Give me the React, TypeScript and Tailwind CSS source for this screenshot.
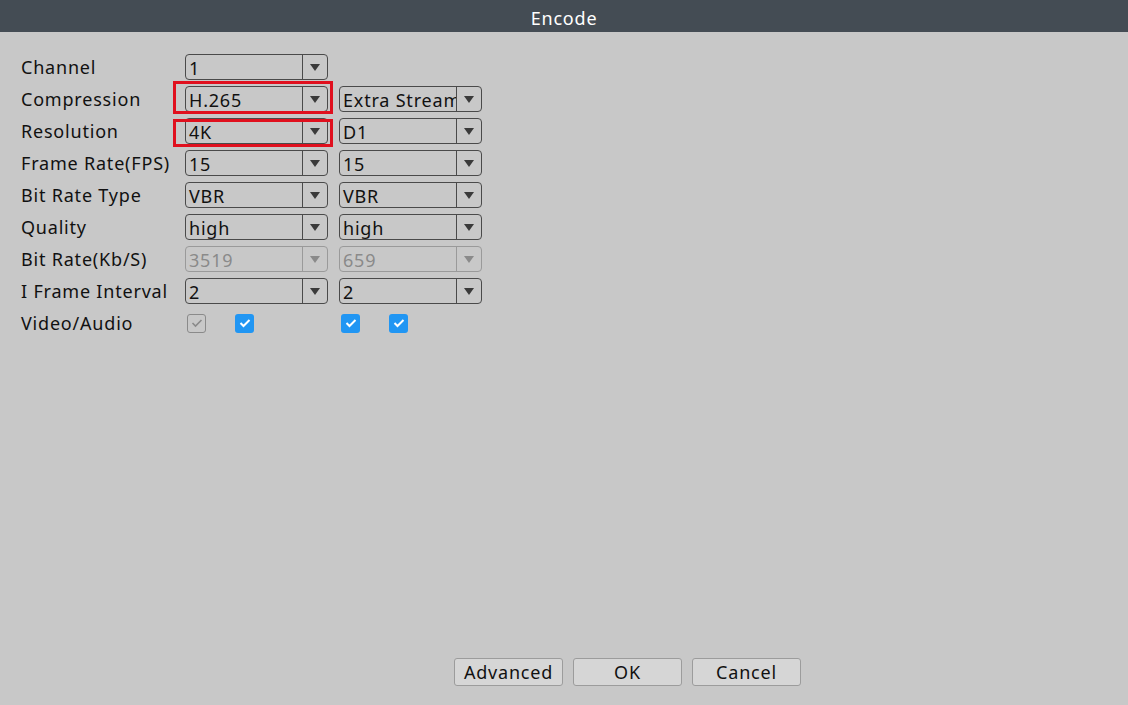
import React from "react";

const font = { fontFamily: '"Noto Sans", "Open Sans", sans-serif' };

function Arrow({ disabled }: { disabled?: boolean }) {
  return (
    <svg width="10" height="7" viewBox="0 0 10 7">
      <polygon points="0,0 10,0 5,7" fill={disabled ? "#8a8a8a" : "#3a3a3a"} />
    </svg>
  );
}

function Select({ value, disabled }: { value: string; disabled?: boolean }) {
  return (
    <div
      className={`flex h-[26px] w-[143px] rounded-[4px] border ${
        disabled ? "border-[#9a9a9a] text-[#8a8a8a]" : "border-[#4a4a4a] text-[#111]"
      }`}
    >
      <div className="flex-1 overflow-hidden whitespace-nowrap pl-[3px] text-[18px] leading-[27px] tracking-[0.8px]">
        {value}
      </div>
      <div
        className={`flex w-[25px] items-center justify-center border-l ${
          disabled ? "border-[#9a9a9a]" : "border-[#4a4a4a]"
        }`}
      >
        <Arrow disabled={disabled} />
      </div>
    </div>
  );
}

function Check({ gray }: { gray?: boolean }) {
  if (gray)
    return (
      <div className="flex h-[19px] w-[19px] items-center justify-center rounded-[3px] border border-[#8a8a8a]">
        <svg width="12" height="10" viewBox="0 0 12 10">
          <polyline points="1.5,5 4.5,8 10.5,2" fill="none" stroke="#8a8a8a" strokeWidth="1.6" />
        </svg>
      </div>
    );
  return (
    <div className="flex h-[19px] w-[19px] items-center justify-center rounded-[3px] bg-[#2196f3]">
      <svg width="12" height="10" viewBox="0 0 12 10">
        <polyline points="1.5,5 4.5,8 10.5,2" fill="none" stroke="#fff" strokeWidth="2" />
      </svg>
    </div>
  );
}

const rows: { label: string; a: string; b?: string; disabled?: boolean }[] = [
  { label: "Channel", a: "1" },
  { label: "Compression", a: "H.265", b: "Extra Stream" },
  { label: "Resolution", a: "4K", b: "D1" },
  { label: "Frame Rate(FPS)", a: "15", b: "15" },
  { label: "Bit Rate Type", a: "VBR", b: "VBR" },
  { label: "Quality", a: "high", b: "high" },
  { label: "Bit Rate(Kb/S)", a: "3519", b: "659", disabled: true },
  { label: "I Frame Interval", a: "2", b: "2" },
];

function Btn({ children }: { children: React.ReactNode }) {
  return (
    <div className="flex h-[28px] w-[109px] items-center justify-center rounded-[3px] border border-[#9c9c9c] bg-[#d6d6d6] pt-[1px] text-[18px] tracking-[0.8px] text-[#111]">
      {children}
    </div>
  );
}

export default function App() {
  return (
    <div className="flex h-[705px] w-[1128px] flex-col bg-[#c8c8c8]" style={font}>
      <div className="flex h-[32px] items-center justify-center bg-[#444c54] pt-[4px] text-[18px] tracking-[0.8px] text-white">
        Encode
      </div>
      <div className="relative flex-1">
        <div className="flex flex-col gap-[6px] pl-[21px] pt-[22px]">
          {rows.map((r) => (
            <div key={r.label} className="flex h-[26px] items-center">
              <div className="w-[164px] whitespace-nowrap pt-[1px] text-[18px] tracking-[0.8px] text-[#111]">
                {r.label}
              </div>
              <Select value={r.a} disabled={r.disabled} />
              <div className="w-[11px]" />
              {r.b && <Select value={r.b} disabled={r.disabled} />}
            </div>
          ))}
          <div className="flex h-[26px] items-center">
            <div className="w-[166px] pt-[1px] text-[18px] tracking-[0.8px] text-[#111]">Video/Audio</div>
            <div className="flex w-[154px] gap-[29px]">
              <Check gray />
              <Check />
            </div>
            <div className="flex gap-[29px]">
              <Check />
              <Check />
            </div>
          </div>
        </div>
        <div className="absolute left-[173px] top-[49px] h-[33px] w-[160px] border-[3px] border-[#e0101e]" />
        <div className="absolute left-[173px] top-[87px] h-[28px] w-[160px] border-[3px] border-[#e0101e]" />
        <div className="absolute bottom-[19px] left-[454px] flex gap-[10px]">
          <Btn>Advanced</Btn>
          <Btn>OK</Btn>
          <Btn>Cancel</Btn>
        </div>
      </div>
    </div>
  );
}
